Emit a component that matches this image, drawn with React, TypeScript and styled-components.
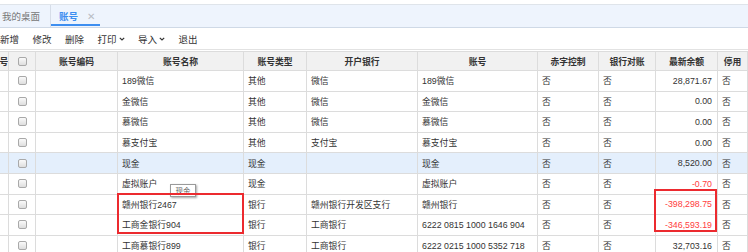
import styled, { createGlobalStyle } from 'styled-components'

const GlobalStyle = createGlobalStyle`
  html, body {
    margin: 0;
    padding: 0;
    background: #fff;
    overflow: hidden;
  }
  body {
    font-family: 'Liberation Sans', 'Noto Sans CJK SC', sans-serif;
    color: #333;
  }
`

const COLS = [9, 27, 82, 126, 63, 111, 120, 61, 57, 62, 30]
const GRID = COLS.map((w) => `${w}px`).join(' ')

const Page = styled.div`
  width: 748px;
  height: 252px;
  overflow: hidden;
  padding-top: 4px;
  box-sizing: border-box;
`

const TabBar = styled.div`
  display: flex;
  align-items: stretch;
  height: 24px;
  box-sizing: border-box;
  background: #eef4fd;
  border-top: 1px solid #dfe4ea;
  border-bottom: 1px solid #cfd9e6;
`

const Tab = styled.div<{ $active?: boolean; $width: number }>`
  position: relative;
  display: flex;
  align-items: center;
  gap: 9px;
  width: ${(p) => p.$width}px;
  box-sizing: border-box;
  padding-left: ${(p) => (p.$active ? 8 : 2)}px;
  font-size: 9.5px;
  color: ${(p) => (p.$active ? '#3d8ef0' : '#777')};
  font-weight: ${(p) => (p.$active ? 'bold' : 'normal')};
  border-left: ${(p) => (p.$active ? '1px solid #d6dde8' : 'none')};
  &::after {
    content: '';
    display: ${(p) => (p.$active ? 'block' : 'none')};
    position: absolute;
    left: 0;
    right: 0;
    bottom: 1px;
    height: 2px;
    background: #3d8ef0;
  }
`

const CloseX = styled.span`
  color: #b8bcc4;
  font-size: 10px;
  font-weight: normal;
`

const Toolbar = styled.div`
  display: flex;
  align-items: center;
  gap: 13.5px;
  height: 22px;
  box-sizing: border-box;
  border-bottom: 1px solid #e2e2e2;
  margin-bottom: 1px;
`

const ToolBtn = styled.span`
  display: flex;
  align-items: center;
  gap: 2px;
  font-size: 9.5px;
  color: #333;
  white-space: nowrap;
`

const TableWrap = styled.div`
  position: relative;
`

const Row = styled.div<{ $head?: boolean; $hl?: boolean }>`
  display: grid;
  grid-template-columns: ${GRID};
  height: ${(p) => (p.$head ? '20px' : '20.6px')};
  box-sizing: border-box;
  border-top: ${(p) => (p.$head ? '1px solid #dcdcdc' : 'none')};
  border-bottom: 1px solid #dcdcdc;
  background: ${(p) => (p.$head ? '#f1f1f1' : p.$hl ? '#e4effc' : '#fff')};
  font-weight: ${(p) => (p.$head ? 'bold' : 'normal')};
`

const Cell = styled.div<{ $align?: 'left' | 'center' | 'right'; $red?: boolean }>`
  display: flex;
  align-items: center;
  justify-content: ${(p) =>
    p.$align === 'center' ? 'center' : p.$align === 'right' ? 'flex-end' : 'flex-start'};
  padding: 0 ${(p) => (p.$align === 'right' ? '5px' : '0')} 0
    ${(p) => (p.$align === 'left' ? '4px' : '0')};
  border-right: 1px solid #dcdcdc;
  font-size: 8.8px;
  color: ${(p) => (p.$red ? '#ff4040' : '#333')};
  white-space: nowrap;
  overflow: hidden;
  min-width: 0;
`

const Check = styled.span`
  width: 7px;
  height: 7px;
  border: 1px solid #a9a9a9;
  border-radius: 2px;
  background: linear-gradient(#fafafa, #dedede);
`

const Tooltip = styled.div`
  position: absolute;
  left: 170px;
  top: 133px;
  width: 26px;
  height: 13px;
  box-sizing: border-box;
  border: 1px solid #9a9a9a;
  background: #fff;
  box-shadow: 1px 1px 2px rgba(0, 0, 0, 0.35);
  font-size: 7.5px;
  color: #555;
  display: flex;
  align-items: center;
  justify-content: center;
`

const Mark = styled.div<{ $l: number; $t: number; $w: number; $h: number }>`
  position: absolute;
  left: ${(p) => p.$l}px;
  top: ${(p) => p.$t}px;
  width: ${(p) => p.$w}px;
  height: ${(p) => p.$h}px;
  box-sizing: border-box;
  border: 2px solid #ec2a2f;
`

const Chevron = () => (
  <svg width="6" height="4" viewBox="0 0 6 4">
    <path d="M0.8 0.8 L3 3 L5.2 0.8" fill="none" stroke="#333" strokeWidth="1.2" />
  </svg>
)

type Account = {
  name: string
  type: string
  bank: string
  no: string
  balance: string
  red?: boolean
  hl?: boolean
}

const rows: Account[] = [
  { name: '189微信', type: '其他', bank: '微信', no: '189微信', balance: '28,871.67' },
  { name: '金微信', type: '其他', bank: '微信', no: '金微信', balance: '0.00' },
  { name: '慕微信', type: '其他', bank: '微信', no: '慕微信', balance: '0.00' },
  { name: '慕支付宝', type: '其他', bank: '支付宝', no: '慕支付宝', balance: '0.00' },
  { name: '现金', type: '现金', bank: '', no: '现金', balance: '8,520.00', hl: true },
  { name: '虚拟账户', type: '现金', bank: '', no: '虚拟账户', balance: '-0.70', red: true },
  {
    name: '赣州银行2467',
    type: '银行',
    bank: '赣州银行开发区支行',
    no: '赣州银行',
    balance: '-398,298.75',
    red: true,
  },
  {
    name: '工商金银行904',
    type: '银行',
    bank: '工商银行',
    no: '6222 0815 1000 1646 904',
    balance: '-346,593.19',
    red: true,
  },
  {
    name: '工商慕银行899',
    type: '银行',
    bank: '工商银行',
    no: '6222 0215 1000 5352 718',
    balance: '32,703.16',
  },
]

const headers = ['账号编码', '账号名称', '账号类型', '开户银行', '账号', '赤字控制', '银行对账', '最新余额', '停用']

const App = (): JSX.Element => {
  return (
    <Page>
      <GlobalStyle />
      <TabBar>
        <Tab $width={50}>我的桌面</Tab>
        <Tab $width={50} $active>
          账号
          <CloseX>✕</CloseX>
        </Tab>
      </TabBar>
      <Toolbar>
        <ToolBtn>新增</ToolBtn>
        <ToolBtn>修改</ToolBtn>
        <ToolBtn>删除</ToolBtn>
        <ToolBtn>
          打印
          <Chevron />
        </ToolBtn>
        <ToolBtn>
          导入
          <Chevron />
        </ToolBtn>
        <ToolBtn>退出</ToolBtn>
      </Toolbar>
      <TableWrap>
        <Row $head>
          {/* the 序号 column is scrolled off, only its last glyph shows */}
          <Cell $align="center">号</Cell>
          <Cell $align="center">
            <Check />
          </Cell>
          {headers.map((h) => (
            <Cell key={h} $align="center">
              {h}
            </Cell>
          ))}
        </Row>
        {rows.map((r) => (
          <Row key={r.name} $hl={r.hl}>
            <Cell />
            <Cell $align="center">
              <Check />
            </Cell>
            <Cell $align="left" />
            <Cell $align="left">{r.name}</Cell>
            <Cell $align="left">{r.type}</Cell>
            <Cell $align="left">{r.bank}</Cell>
            <Cell $align="left">{r.no}</Cell>
            <Cell $align="left">否</Cell>
            <Cell $align="left">否</Cell>
            <Cell $align="right" $red={r.red}>
              {r.balance}
            </Cell>
            <Cell $align="left">否</Cell>
          </Row>
        ))}
        <Tooltip>现金</Tooltip>
        <Mark $l={117} $t={142} $w={127} $h={41} />
        <Mark $l={654} $t={138} $w={63} $h={43} />
      </TableWrap>
    </Page>
  )
}

export default App
